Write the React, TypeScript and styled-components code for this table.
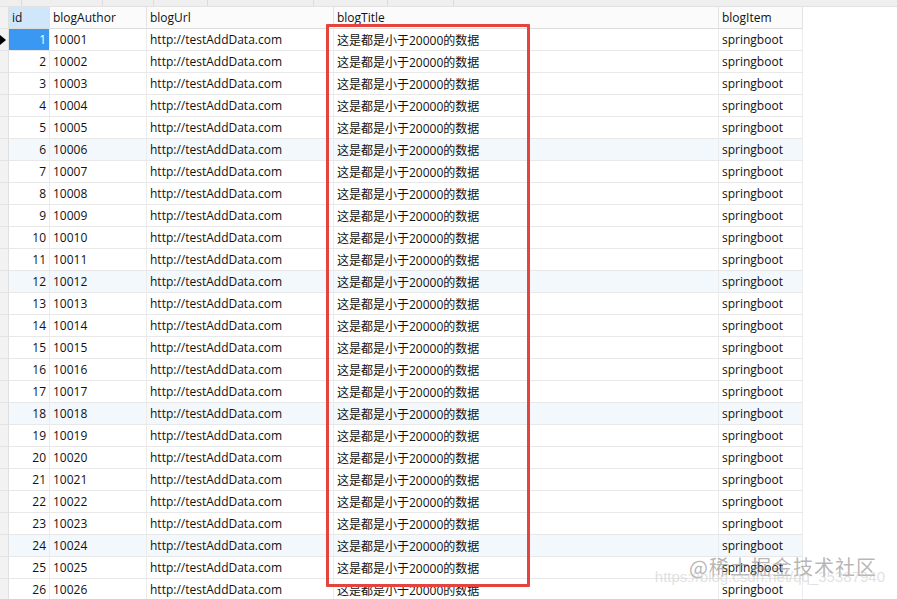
import React from "react";
import styled, { createGlobalStyle } from "styled-components";

const Global = createGlobalStyle`
  html, body { margin: 0; padding: 0; background: #ffffff; }
  body { font-family: "Open Sans", "Noto Sans CJK SC", sans-serif; }
`;

const Page = styled.div`
  width: 897px;
  height: 599px;
  overflow: hidden;
  position: relative;
  background: #ffffff;
  display: flex;
  flex-direction: column;
`;

const Toolbar = styled.div`
  height: 7px;
  flex: none;
  background: #efefef;
  border-bottom: 1px solid #e2e2e2;
  box-sizing: border-box;
  display: flex;
`;

const ToolSeg = styled.div<{ $w: number }>`
  width: ${(p) => p.$w}px;
  flex: none;
  border-right: 1px solid #dcdcdc;
  box-sizing: border-box;
`;

const Grid = styled.div`
  display: grid;
  grid-template-columns: 9px 41px 97px 187px 385px 84px;
  grid-auto-rows: 22px;
  font-size: 12px;
  color: #111;
  width: 803px;
`;

const HeadCell = styled.div<{ $sel?: boolean }>`
  box-sizing: border-box;
  border-right: 1px solid #e3e3e3;
  border-bottom: 1px solid #dcdcdc;
  background: ${(p) => (p.$sel ? "#cfe6fb" : "#fbfbfb")};
  padding: 0 3px;
  display: flex;
  align-items: center;
  white-space: nowrap;
  overflow: hidden;
`;

const Gutter = styled.div`
  box-sizing: border-box;
  background: #f2f2f2;
  border-right: 1px solid #e0e0e0;
  border-bottom: 1px solid #e3e3e3;
  display: flex;
  align-items: center;
`;

const Arrow = styled.div`
  width: 0;
  height: 0;
  border-top: 5px solid transparent;
  border-bottom: 5px solid transparent;
  border-left: 6px solid #000;
`;

const Cell = styled.div<{ $alt?: boolean; $right?: boolean; $sel?: boolean }>`
  box-sizing: border-box;
  border-right: 1px solid #ececec;
  border-bottom: 1px solid #e8e8e8;
  background: ${(p) => (p.$sel ? "#3a98f2" : p.$alt ? "#f3f8fd" : "#ffffff")};
  color: ${(p) => (p.$sel ? "#ffffff" : "#111")};
  padding: 0 3px;
  display: flex;
  align-items: center;
  justify-content: ${(p) => (p.$right ? "flex-end" : "flex-start")};
  white-space: nowrap;
  overflow: hidden;
`;

const Highlight = styled.div`
  position: absolute;
  left: 326px;
  top: 24px;
  width: 204px;
  height: 563px;
  box-sizing: border-box;
  border: 3px solid #e5433e;
  border-radius: 1px;
  pointer-events: none;
`;

const Watermark = styled.div`
  position: absolute;
  right: 20px;
  bottom: 14px;
  display: flex;
  flex-direction: column;
  align-items: flex-end;
  pointer-events: none;
  font-family: "Noto Sans CJK SC", sans-serif;
`;

const WmTitle = styled.div`
  font-size: 20px;
  color: rgba(120, 120, 120, 0.55);
  line-height: 22px;
  letter-spacing: 1px;
`;

const WmUrl = styled.div`
  font-family: "Liberation Sans", sans-serif;
  font-size: 15px;
  color: rgba(200, 200, 200, 0.55);
  margin-top: -10px;
  margin-right: -8px;
`;

const headers = ["id", "blogAuthor", "blogUrl", "blogTitle", "blogItem"];
const rows = Array.from({ length: 26 }, (_, i) => i + 1);

export default function App() {
  return (
    <Page>
      <Global />
      <Toolbar>
        <ToolSeg $w={22} />
        <ToolSeg $w={81} />
        <ToolSeg $w={51} />
        <ToolSeg $w={54} />
        <ToolSeg $w={106} />
        <ToolSeg $w={74} />
        <ToolSeg $w={66} />
      </Toolbar>
      <Grid>
        <Gutter />
        {headers.map((h) => (
          <HeadCell key={h} $sel={h === "id"}>
            {h}
          </HeadCell>
        ))}
        {rows.map((n) => {
          const alt = n % 6 === 0;
          const num = String(10000 + n);
          return (
            <React.Fragment key={n}>
              <Gutter>{n === 1 && <Arrow />}</Gutter>
              <Cell $right $alt={alt} $sel={n === 1}>
                {n}
              </Cell>
              <Cell $alt={alt}>{num}</Cell>
              <Cell $alt={alt}>http://testAddData.com</Cell>
              <Cell $alt={alt}>这是都是小于20000的数据</Cell>
              <Cell $alt={alt}>springboot</Cell>
            </React.Fragment>
          );
        })}
      </Grid>
      <Highlight />
      <Watermark>
        <WmTitle>@稀土掘金技术社区</WmTitle>
        <WmUrl>https://blog.csdn.net/qq_35387940</WmUrl>
      </Watermark>
    </Page>
  );
}
